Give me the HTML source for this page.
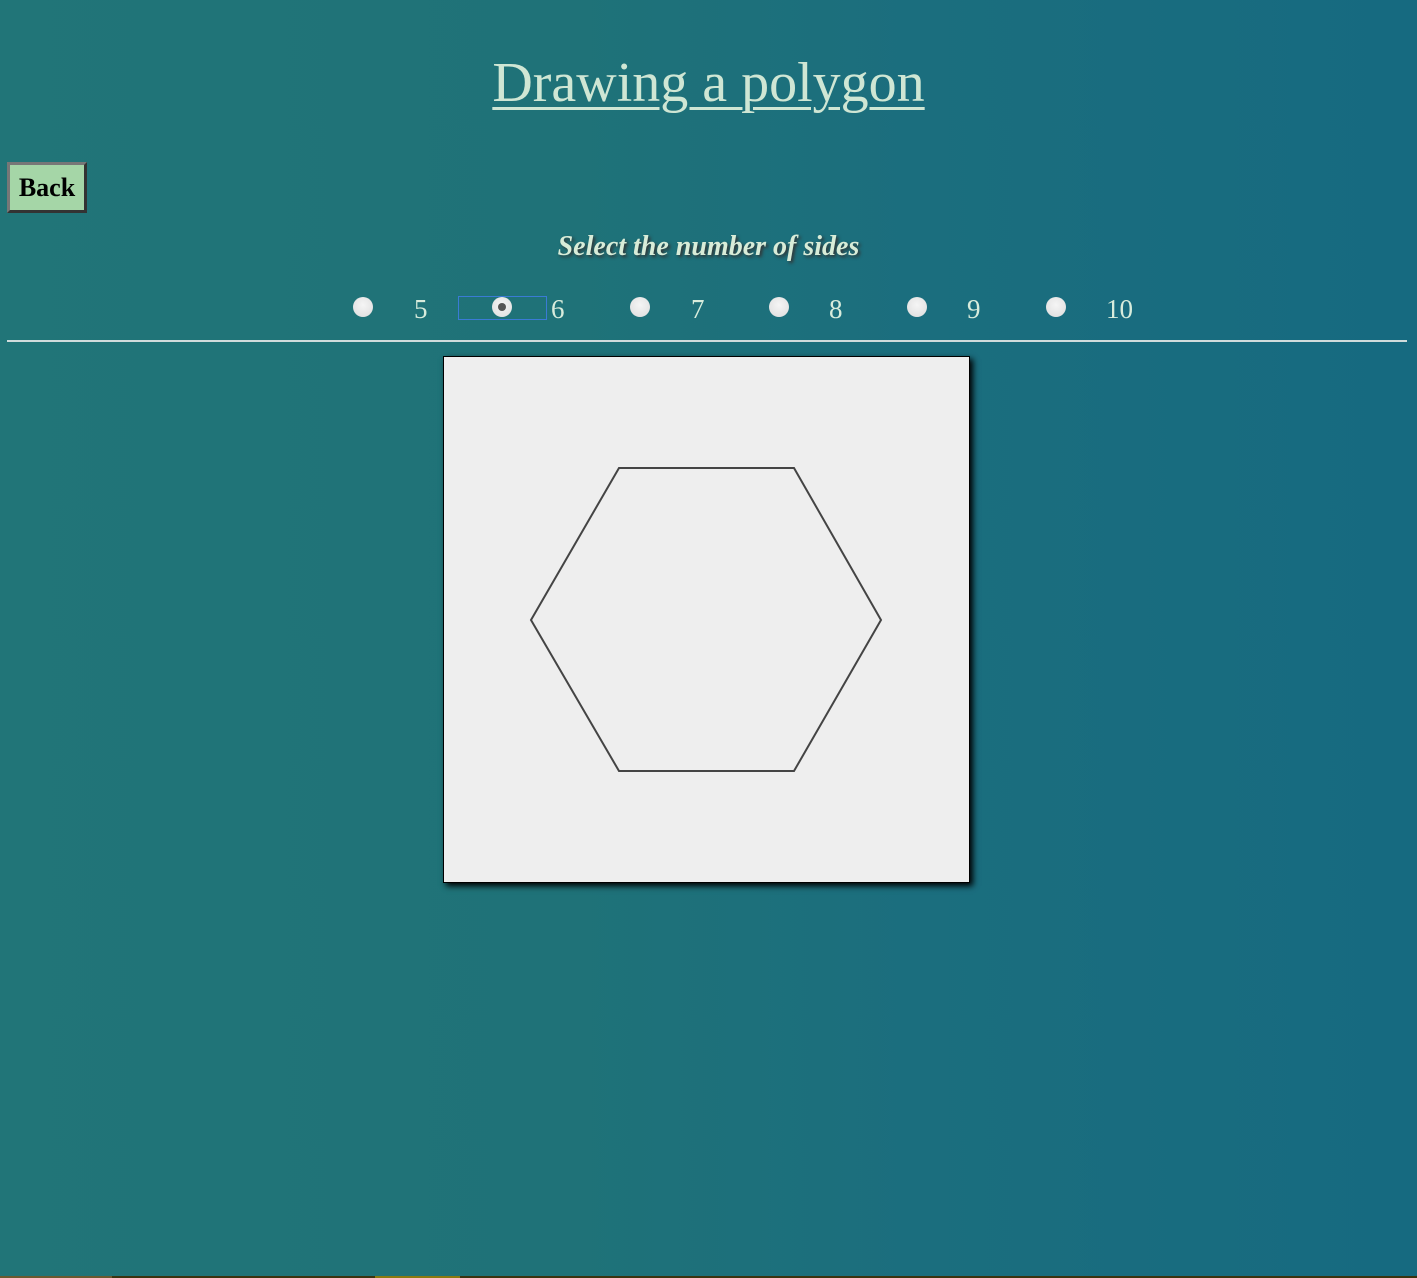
<!DOCTYPE html>
<html><head><meta charset="utf-8"><style>
html,body{margin:0;padding:0;}
body{width:1417px;height:1278px;overflow:hidden;position:relative;font-family:"Liberation Serif",serif;
background:linear-gradient(to right,#217578 0%,#1f7278 40%,#1b6e7e 65%,#166a80 100%);}
.title{position:absolute;left:0;width:1417px;top:50px;text-align:center;font-size:56px;color:#cfe6d4;text-decoration:underline;text-decoration-thickness:3px;text-underline-offset:6px;line-height:66px;}
.back{position:absolute;left:7px;top:162px;width:74px;height:45px;background:#a5d6a7;border:3px solid;border-color:#777 #333 #333 #777;font-weight:bold;font-size:26px;line-height:45px;text-align:center;color:#000;}
.sub{position:absolute;left:0;width:1417px;top:231px;text-align:center;font-size:28px;font-weight:bold;font-style:italic;color:#d8ecd8;text-shadow:2px 2px 3px #333;}
.r{position:absolute;top:297px;width:20px;height:20px;border-radius:50%;background:radial-gradient(circle at 50% 40%,#f5f5f5,#dcdcdc);}
.lbl{position:absolute;top:294px;font-size:27px;color:#d8ecdc;}
hr{position:absolute;left:7px;top:340px;width:1400px;margin:0;border:0;border-top:2px solid #d0dcdc;}
.cv{position:absolute;left:443px;top:356px;width:525px;height:525px;background:#eee;border:1px solid #000;box-shadow:3px 3px 6px #000;}
.strip{position:absolute;left:0;top:1276px;width:1417px;height:2px;background:#3a3410;}
</style></head><body>
<div class="title">Drawing a polygon</div>
<div class="back">Back</div>
<div class="sub">Select the number of sides</div>
<div class="r" style="left:353px"></div><div class="lbl" style="left:414px">5</div>
<div style="position:absolute;left:458px;top:296px;width:87px;height:22px;border:1px solid #3a7bd5;"></div>
<div class="r" style="left:492px"></div>
<div style="position:absolute;left:498px;top:303px;width:8px;height:8px;border-radius:50%;background:#555;"></div>
<div class="lbl" style="left:551px">6</div>
<div class="r" style="left:630px"></div><div class="lbl" style="left:691px">7</div>
<div class="r" style="left:769px"></div><div class="lbl" style="left:829px">8</div>
<div class="r" style="left:907px"></div><div class="lbl" style="left:967px">9</div>
<div class="r" style="left:1046px"></div><div class="lbl" style="left:1106px">10</div>
<hr>
<div class="cv"><svg width="525" height="525" style="position:absolute;left:0;top:0">
<polygon points="87,263 175,111 350,111 437,263 350,414 175,414" fill="none" stroke="#444" stroke-width="2"/></svg></div>
<div class="strip"></div>
<div style="position:absolute;left:0;top:1276px;width:112px;height:2px;background:#6a5a30"></div>
<div style="position:absolute;left:375px;top:1276px;width:85px;height:2px;background:#8a7a10"></div>
</body></html>
